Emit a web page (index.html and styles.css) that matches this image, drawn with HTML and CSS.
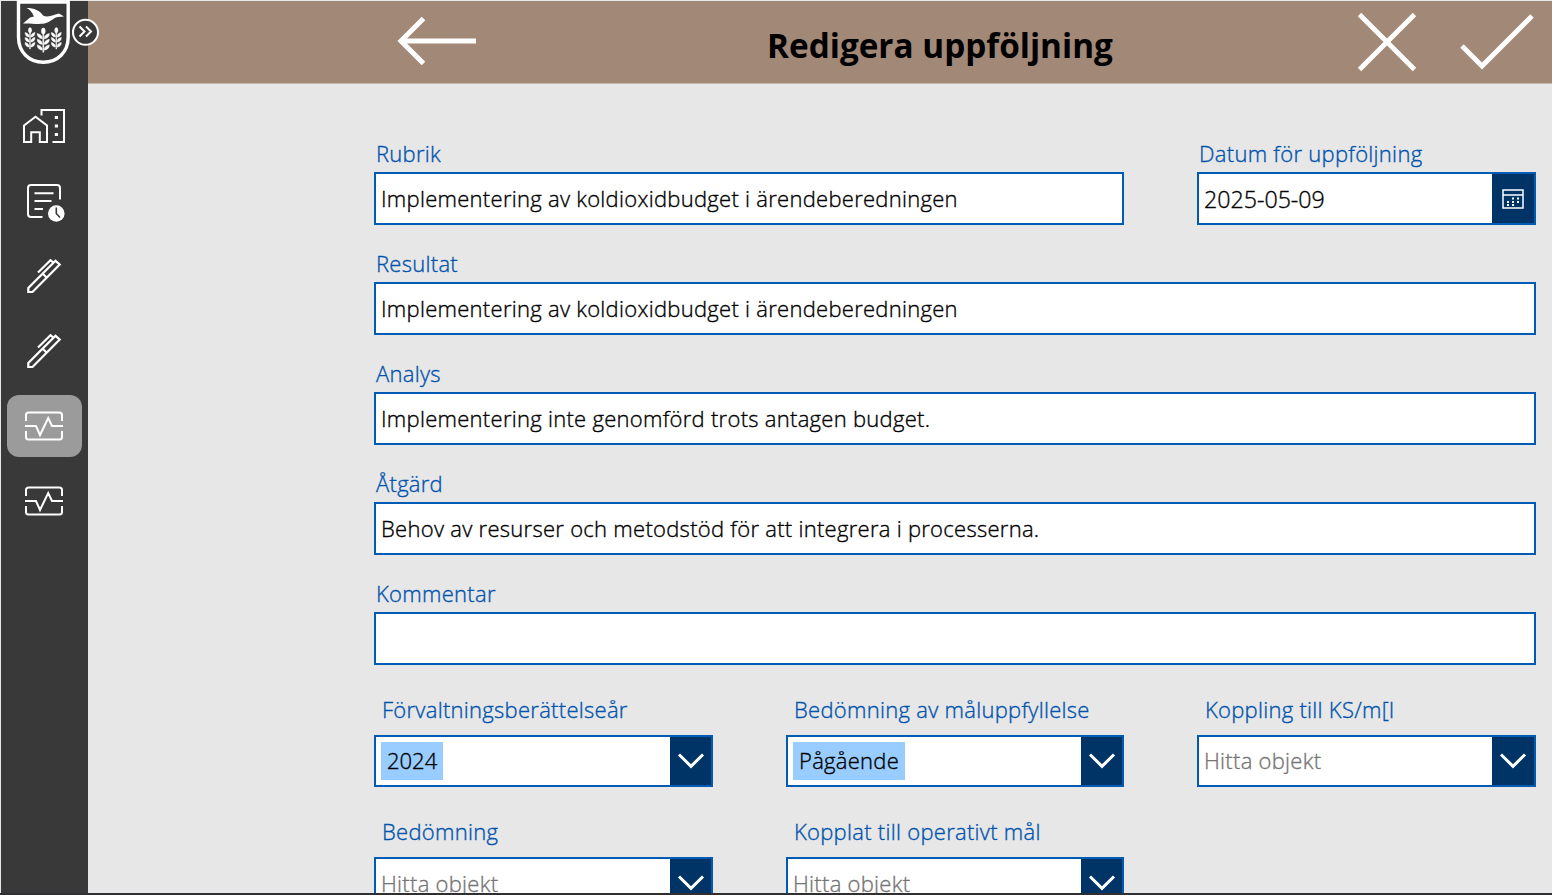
FILE: index.html
```html
<!DOCTYPE html>
<html lang="sv">
<head>
<meta charset="utf-8">
<title>Redigera uppföljning</title>
<link rel="stylesheet" href="styles.css">
</head>
<body>
<div class="app">
  <nav class="sidebar">
    <svg class="crest" width="56" height="64" viewBox="16 0 56 64">
      <path d="M18.500 0V37C18.500 52 29 62.300 43.300 62.300S68.200 52 68.200 37V0" fill="none" stroke="#fff" stroke-width="3.400"/>
      <path d="M18 2H69" stroke="#fff" stroke-width="3.400"/>
      <path d="M23 23.500L30 17.500L34 16.500C32 12 30 9.500 26.500 8C34 8 40 10.500 43 15.500C49 18.500 54 14 59 13.500L64 16.500L58 17C54 17.500 52 21 46 23C40 25 31 23 23 23.500Z" fill="#fff"/>
      <defs>
        <g id="ear" fill="#fff" stroke="#fff" stroke-width=".5">
          <ellipse cx="0" cy="2.300" rx="1.600" ry="2.700"/>
          <path d="M-.8 9C-3 9-5 7.500-5 4.500C-2.500 5-.8 6.500-.8 9ZM.8 9C3 9 5 7.500 5 4.500C2.500 5 .8 6.500 .8 9ZM-.8 14C-3 14-5 12.500-5 9.500C-2.500 10-.8 11.500-.8 14ZM.8 14C3 14 5 12.500 5 9.500C2.500 10 .8 11.500 .8 14ZM-.8 19C-3 19-5 17.500-5 14.500C-2.500 15-.8 16.500-.8 19ZM.8 19C3 19 5 17.500 5 14.500C2.500 15 .8 16.500 .8 19Z"/>
          <path d="M-.35 4H.35V21H-.35Z"/>
        </g>
      </defs>
      <use href="#ear" x="30" y="28"/>
      <use href="#ear" x="56.300" y="28"/>
      <use href="#ear" transform="translate(43.300 28.500) scale(1.200 1.130)"/>
    </svg>
    <svg class="expand" width="28" height="28" viewBox="0 0 28 28" fill="none" stroke="#fff">
      <circle cx="14.500" cy="14.300" r="12.500" fill="#393939" stroke-width="2"/>
      <path d="M8.500 8.500L13.500 13.500L8.500 18.500M15 8.500L20 13.500L15 18.500" stroke-width="2"/>
    </svg>
    <div class="nav-items">
      <a class="nav-item">
        <svg width="74" height="62" viewBox="7 95 74 62" fill="none" stroke="#fff" stroke-width="2">
          <path d="M24 125.500L35.500 116.800L47 125.500V142H39.800V132.300H31.200V142H24ZM41.500 115.500V110H64V142H52.500"/>
          <path d="M54.800 117.500H58M54.800 126H58M54.800 134.500H58" stroke-width="3.200"/>
        </svg>
      </a>
      <a class="nav-item">
        <svg width="74" height="62" viewBox="7 170 74 62" fill="none" stroke="#fff" stroke-width="2">
          <path d="M42.500 217H31Q28 217 28 214V188Q28 185 31 185H57Q60 185 60 188V199.500M34.500 193.300H53.500M34.500 201H51.500M34.500 209H43"/>
          <circle cx="56.300" cy="213.500" r="8.300" fill="#fff" stroke="none"/>
          <path d="M56.300 207.500V213.500L60 217.500" stroke="#393939" stroke-width="1.600"/>
        </svg>
      </a>
      <a class="nav-item"><svg width="74" height="62" viewBox="7 245 74 62"><use href="#pen"/></svg></a>
      <a class="nav-item"><svg width="74" height="62" viewBox="7 245 74 62">
        <g id="pen" fill="none" stroke="#fff" stroke-width="2.200"><path d="M28.300 292V288L55.500 260.800L59.700 264.500L32.500 292ZM42.500 273.500L46.500 277.500M38 272.500L50.500 260.300L54 263"/></g>
      </svg></a>
      <a class="nav-item active"><svg width="74" height="62" viewBox="7 395 74 62"><use href="#pulse"/></svg></a>
      <a class="nav-item"><svg width="74" height="62" viewBox="7 395 74 62">
        <g id="pulse" fill="none" stroke="#fff" stroke-width="2"><path d="M26 421V415Q26 412.500 28.500 412.500H59.500Q62 412.500 62 415V421M26 431V437Q26 439.500 28.500 439.500H59.500Q62 439.500 62 437V431M25 426H36L40 435L48.200 418L52 426H63"/></g>
      </svg></a>
    </div>
  </nav>
  <div class="page">
    <header class="topbar">
      <svg class="back" width="80" height="50" viewBox="397 16 80 50" fill="none" stroke="#fff" stroke-width="5"><path d="M423.500 18.500L401 41L423.500 63.500M401 41H476"/></svg>
      <h1>Redigera uppföljning</h1>
      <svg class="cancel" width="60" height="60" viewBox="1357 12 60 60" fill="none" stroke="#fff" stroke-width="4.800"><path d="M1359.500 14.500L1414.500 69.500M1414.500 14.500L1359.500 69.500"/></svg>
      <svg class="save" width="76" height="60" viewBox="1459 12 76 60" fill="none" stroke="#fff" stroke-width="4.800"><path d="M1462 46L1482 66L1532 16"/></svg>
    </header>
    <main class="form">
      <section class="field wide"><label>Rubrik</label><div class="box"><span class="text">Implementering av koldioxidbudget i ärendeberedningen</span></div></section>
      <section class="field"><label>Datum för uppföljning</label><div class="box"><span class="text date">2025-05-09</span>
        <div class="btn"><svg width="22" height="20" viewBox="0 0 22 20"><path d="M1 1H21V19H1ZM1 6H21" fill="none" stroke="#fff" stroke-width="1.500"/><path d="M10 8.500h2v2h-2zm5 0h2v2h-2zM5 12h2v2h-2zm5 0h2v2h-2zm5 0h2v2h-2zM5 15h2v2h-2zm5 0h2v2h-2z" fill="#fff"/></svg></div></div></section>
      <section class="field full"><label>Resultat</label><div class="box"><span class="text">Implementering av koldioxidbudget i ärendeberedningen</span></div></section>
      <section class="field full"><label>Analys</label><div class="box"><span class="text">Implementering inte genomförd trots antagen budget.</span></div></section>
      <section class="field full"><label>Åtgärd</label><div class="box"><span class="text">Behov av resurser och metodstöd för att integrera i processerna.</span></div></section>
      <section class="field full"><label>Kommentar</label><div class="box"></div></section>
      <section class="field pick"><label>Förvaltningsberättelseår</label><div class="box"><span class="tag year">2024</span><div class="btn"><svg width="28" height="18" viewBox="0 0 28 18"><path id="chev" d="M2 2.500L14 14.300L26 2.500" fill="none" stroke="#fff" stroke-width="3"/></svg></div></div></section>
      <section class="field pick"><label>Bedömning av måluppfyllelse</label><div class="box"><span class="tag">Pågående</span><div class="btn"><svg width="28" height="18" viewBox="0 0 28 18"><use href="#chev"/></svg></div></div></section>
      <section class="field pick"><label>Koppling till KS/m[l</label><div class="box"><span class="text hint">Hitta objekt</span><div class="btn"><svg width="28" height="18" viewBox="0 0 28 18"><use href="#chev"/></svg></div></div></section>
      <section class="field pick"><label>Bedömning</label><div class="box"><span class="hint">Hitta objekt</span><div class="btn"><svg width="28" height="18" viewBox="0 0 28 18"><use href="#chev"/></svg></div></div></section>
      <section class="field pick"><label>Kopplat till operativt mål</label><div class="box"><span class="hint">Hitta objekt</span><div class="btn"><svg width="28" height="18" viewBox="0 0 28 18"><use href="#chev"/></svg></div></div></section>
    </main>
  </div>
</div>
</body>
</html>
```
FILE: styles.css
```css
* { box-sizing: border-box; }
body {
  margin: 0;
  height: 895px;
  overflow: hidden;
  background: #e7e7e7;
  font: 300 22px/30px "Open Sans", "Noto Sans", sans-serif;
  letter-spacing: 0.28px;
  -webkit-text-stroke: 0.35px;
  color: #000;
}
svg { display: block; flex: none; }
.app {
  display: flex;
  height: 895px;
  padding: 1px 0 0 1px;
  border-bottom: 2px solid #303033;
  overflow: hidden;
}
.sidebar {
  position: relative;
  z-index: 1;
  width: 87px;
  flex: none;
  background: #393939;
}
.crest { margin: -1px 0 0 15px; }
.expand { position: absolute; left: 70px; top: 17px; }
.nav-items {
  display: flex;
  flex-direction: column;
  gap: 13px;
  padding: 31px 0 0 6px;
}
.nav-item { width: 75px; height: 62px; border-radius: 12px; }
.nav-item.active { background: #9b9b9b; }
.page { flex: 1; min-width: 0; }
.topbar {
  display: flex;
  height: 83px;
  padding-left: 309px;
  background: #a28876;
  border-bottom: 1px solid #c5b8af;
}
.back { margin-top: 15px; }
h1 {
  width: 347px;
  margin: 19px 0 0 290px;
  font-size: 33.3px;
  line-height: 50px;
  font-weight: 700;
  letter-spacing: 0;
  -webkit-text-stroke: 0;
  white-space: nowrap;
}
.cancel { margin: 11px 0 0 243px; }
.save { margin: 11px 0 0 42px; }
.form {
  display: grid;
  grid-template-columns: 339px 338px 339px;
  column-gap: 73px;
  width: 1162px;
  margin: 54px 0 0 286px;
}
.field { height: 110px; }
.wide { grid-column: span 2; }
.full { grid-column: 1 / -1; }
label {
  display: block;
  height: 34px;
  padding-left: 2px;
  color: #0053ad;
  white-space: nowrap;
}
.box {
  display: flex;
  align-items: center;
  height: 53px;
  padding-left: 5px;
  border: 2px solid #005bb5;
  background: #fff;
  white-space: nowrap;
}
.text { padding-bottom: 2px; }
.text.date { padding-bottom: 0; font-size: 23.2px; letter-spacing: 0; }
.btn {
  display: flex;
  align-items: center;
  justify-content: center;
  align-self: stretch;
  width: 42px;
  margin-left: auto;
  background: #003366;
}
.pick { height: 122px; padding-top: 6px; }
.pick label { height: 41px; padding-left: 8px; }
.pick .box { height: 52px; }
.pick .btn { width: 41px; }
.pick:nth-child(9) .btn { width: 42px; }
.tag {
  height: 38px;
  padding: 0 6px;
  line-height: 36px;
  background: #99ccff;
}
.year { letter-spacing: 0; }
.hint { color: #757575; }
```
